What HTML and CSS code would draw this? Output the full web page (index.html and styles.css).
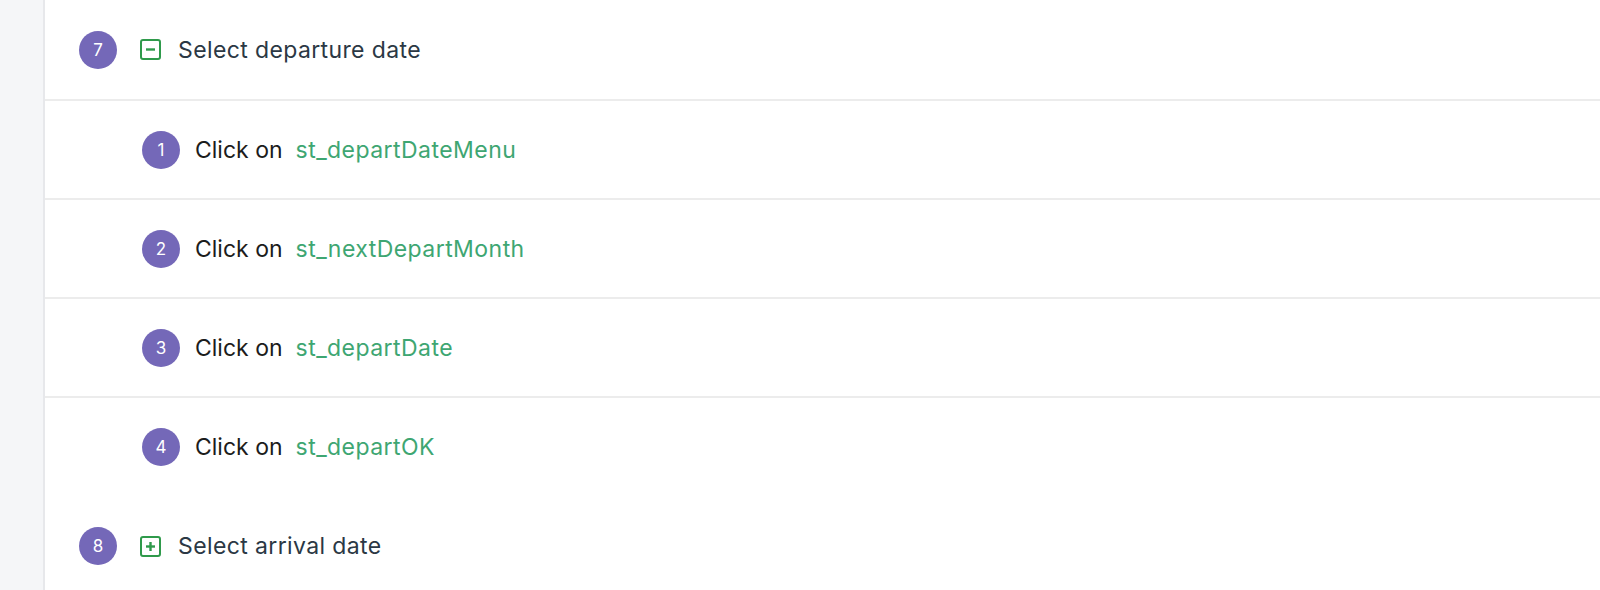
FILE: index.html
```html
<!DOCTYPE html>
<html>
<head>
<meta charset="utf-8">
<link rel="stylesheet" href="styles.css">
</head>
<body>
<div class="page">
  <aside class="sidebar"></aside>
  <main class="main">
    <div class="row group first">
      <span class="badge">7</span>
      <svg class="toggle" viewBox="0 0 21 21" width="21" height="21"><rect x="1" y="1" width="19" height="19" rx="2" fill="none" stroke="#2f9a4b" stroke-width="2"/><line x1="6" y1="10.5" x2="15" y2="10.5" stroke="#2f9a4b" stroke-width="2.4"/></svg>
      <span class="title">Select departure date</span>
    </div>
    <div class="row step">
      <span class="badge">1</span>
      <span class="action">Click on</span>
      <span class="target">st_departDateMenu</span>
    </div>
    <div class="row step">
      <span class="badge">2</span>
      <span class="action">Click on</span>
      <span class="target">st_nextDepartMonth</span>
    </div>
    <div class="row step">
      <span class="badge">3</span>
      <span class="action">Click on</span>
      <span class="target">st_departDate</span>
    </div>
    <div class="row step last-step">
      <span class="badge">4</span>
      <span class="action">Click on</span>
      <span class="target">st_departOK</span>
    </div>
    <div class="row group final">
      <span class="badge">8</span>
      <svg class="toggle" viewBox="0 0 21 21" width="21" height="21"><rect x="1" y="1" width="19" height="19" rx="2" fill="none" stroke="#2f9a4b" stroke-width="2"/><line x1="6" y1="10.5" x2="15" y2="10.5" stroke="#2f9a4b" stroke-width="2.4"/><line x1="10.5" y1="6" x2="10.5" y2="15" stroke="#2f9a4b" stroke-width="2.4"/></svg>
      <span class="title">Select arrival date</span>
    </div>
  </main>
</div>
</body>
</html>
```
FILE: styles.css
```css
html, body {
  margin: 0;
  padding: 0;
  background: #ffffff;
}
body {
  font-family: Inter, "Noto Sans", sans-serif;
  height: 590px;
  overflow: hidden;
}
.page {
  display: flex;
  min-height: 590px;
}
.sidebar {
  width: 43px;
  flex: none;
  background: #f5f6f8;
  border-right: 2px solid #e7e8eb;
}
.main {
  flex: 1;
  display: flex;
  flex-direction: column;
}
.row {
  box-sizing: border-box;
  height: 99px;
  flex: none;
  display: flex;
  align-items: center;
  border-bottom: 2px solid #ececec;
}
.row.first {
  height: 101px;
}
.row.last-step {
  border-bottom: none;
  height: 98px;
}
.row.final {
  border-bottom: none;
  height: 100px;
}
.group {
  padding-left: 34px;
}
.step {
  padding-left: 97px;
}
.badge {
  width: 38px;
  height: 38px;
  border-radius: 50%;
  background: #7468b8;
  color: #ffffff;
  font-size: 17px;
  display: flex;
  align-items: center;
  justify-content: center;
  flex: none;
}
.toggle {
  margin-left: 23px;
  flex: none;
}
.title {
  margin-left: 17px;
  font-size: 23px;
  letter-spacing: 0.38px;
  color: #2b3844;
}
.action {
  margin-left: 15px;
  font-size: 23px;
  color: #1c1c1c;
}
.target {
  margin-left: 13px;
  font-size: 23px;
  letter-spacing: 0.45px;
  color: #3ea672;
}
```
